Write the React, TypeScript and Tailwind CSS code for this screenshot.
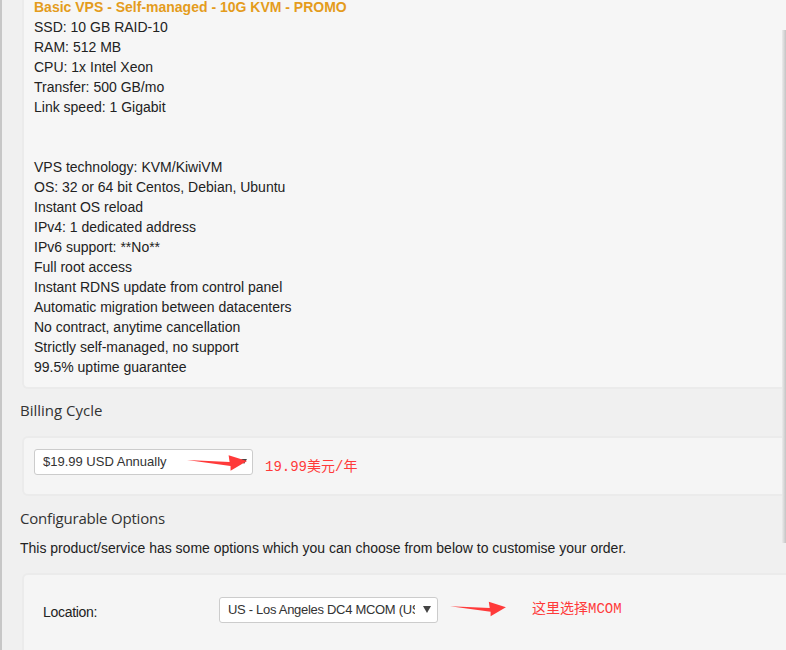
import React from 'react';

const specs = [
  'SSD: 10 GB RAID-10',
  'RAM: 512 MB',
  'CPU: 1x Intel Xeon',
  'Transfer: 500 GB/mo',
  'Link speed: 1 Gigabit',
  '',
  '',
  'VPS technology: KVM/KiwiVM',
  'OS: 32 or 64 bit Centos, Debian, Ubuntu',
  'Instant OS reload',
  'IPv4: 1 dedicated address',
  'IPv6 support: **No**',
  'Full root access',
  'Instant RDNS update from control panel',
  'Automatic migration between datacenters',
  'No contract, anytime cancellation',
  'Strictly self-managed, no support',
  '99.5% uptime guarantee',
];

const arial = { fontFamily: '"Liberation Sans", Arial, sans-serif' };
const heading = { fontFamily: '"Open Sans", "Noto Sans", sans-serif' };
const note = { fontFamily: '"Liberation Mono", "Noto Sans CJK SC", monospace' };

function RedArrow({ className }: { className: string }) {
  return (
    <svg className={className} viewBox="0 0 62 20" fill="#ff3a3a">
      <polygon points="0,7 44,9 43,2 62,8 45,18 45,13" />
    </svg>
  );
}

export default function App() {
  return (
    <div className="relative w-[786px] h-[650px] overflow-hidden bg-[#f0f0f0] border-l-2 border-[#c7c7c7] flex flex-col text-[#222]" style={arial}>
      {/* product description */}
      <div className="ml-[20px] -mr-4 bg-[#f6f6f6] border-x-2 border-b-2 border-[#ebebeb] rounded-b-md pl-[10px] pb-[10px]">
        <div className="-mt-[3px] text-[14px] leading-[20px]">
          <div className="font-bold text-[#e49c1c]">Basic VPS - Self-managed - 10G KVM - PROMO</div>
          {specs.map((s, i) => (
            <div key={i} className="h-[20px]">{s}</div>
          ))}
        </div>
      </div>

      <div className="h-[47px] flex items-center pb-[4px] pl-[18px] text-[15px] text-[#333]" style={heading}>
        Billing Cycle
      </div>

      {/* billing cycle */}
      <div className="ml-[20px] -mr-4 h-[60px] bg-[#f5f5f5] border-2 border-[#ebebeb] rounded-md pl-[10px] pt-[11px] flex items-start">
        <div className="relative w-[219px] h-[26px] bg-white border border-[#cccccc] rounded-[3px] flex items-center pl-[8px] text-[13px] text-[#333]">
          $19.99 USD Annually
          <span className="absolute right-[5px] top-[9px] w-0 h-0 border-x-[3.5px] border-x-transparent border-t-[5px] border-t-[#444]" />
          <RedArrow className="absolute left-[152px] top-[3px] w-[60px] h-[20px]" />
        </div>
        <span className="ml-[12px] mt-[10px] text-[14px] leading-[16px] text-[#ff3a3a]" style={note}>
          19.99美元/年
        </span>
      </div>

      <div className="h-[77px] flex flex-col pl-[18px]">
        <div className="mt-[10px] h-[24px] flex items-center text-[15px] tracking-[-0.2px] text-[#333]" style={heading}>
          Configurable Options
        </div>
        <div className="mt-[8px] h-[20px] flex items-center text-[14px] text-[#222]">
          This product/service has some options which you can choose from below to customise your order.
        </div>
      </div>

      {/* options */}
      <div className="ml-[20px] -mr-4 -mb-4 flex-1 bg-[#f5f5f5] border-2 border-[#ebebeb] rounded-md pt-[22px] pl-[19px]">
        <div className="flex items-center">
          <div className="w-[176px] pt-[5px] text-[14px] tracking-[-0.3px]">Location:</div>
          <div className="relative w-[219px] h-[26px] bg-white border border-[#cccccc] rounded-[3px] flex items-center pl-[8px] pr-[22px] text-[13px] tracking-[-0.3px] text-[#333] overflow-hidden whitespace-nowrap">
            <span className="overflow-hidden">US - Los Angeles DC4 MCOM (US)</span>
            <span className="absolute right-[6px] top-[8px] w-0 h-0 border-x-[4px] border-x-transparent border-t-[7px] border-t-[#444]" />
          </div>
          <RedArrow className="ml-[11px] mt-[-2px] w-[58px] h-[18px]" />
          <span className="ml-[25px] mt-[-2px] text-[14px] text-[#ff3a3a]" style={note}>
            这里选择MCOM
          </span>
        </div>
      </div>

      {/* shadow from an element off to the right */}
      <div className="absolute right-0 top-[30px] w-[4px] h-[513px] bg-linear-to-r from-[#ececec] to-[#c4c4c4]" />
    </div>
  );
}
